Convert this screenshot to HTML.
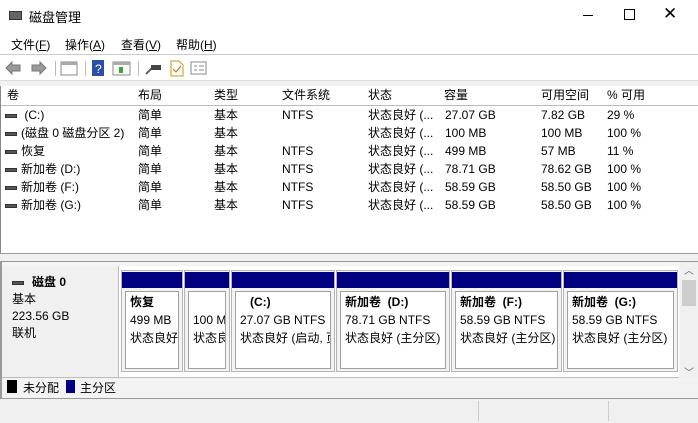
<!DOCTYPE html>
<html><head><meta charset="utf-8"><style>
*{margin:0;padding:0;box-sizing:border-box}
body{width:698px;height:423px;overflow:hidden;background:#fff;font-family:"Liberation Sans","Noto Sans CJK SC",sans-serif;font-size:12px;color:#000;position:relative}
.a{position:absolute;white-space:nowrap}
.hd{position:absolute;top:86px;height:20px;background:#fff;border-right:1px solid #aaa;border-bottom:1px solid #bbb;padding-left:6px;line-height:19px}
.row{position:absolute;left:0;width:690px;height:18px;line-height:18px}
.row span{position:absolute}
.di{display:inline-block;width:12px;height:4px;background:#555;border:1px solid #333;vertical-align:middle;margin-right:4px}
.p{position:absolute;top:270px;height:102px;border:1px solid #b5b5b5;background:#f3f3f3}
.p .bar{position:absolute;left:0;right:0;top:1px;height:16px;background:#000080}
.p .in{position:absolute;left:3px;right:3px;top:20px;bottom:2px;background:#fff;border:1px solid #a0a0a0;padding:1px 0 0 4px;line-height:18px;overflow:hidden;white-space:nowrap}
b{font-weight:bold}
</style></head><body>
<div class="a" style="left:9px;top:11px;width:13px;height:9px;background:#666;border:1px solid #333"></div>
<div class="a" style="left:29px;top:7px;font-size:13px">磁盘管理</div>
<div class="a" style="left:583px;top:15px;width:10px;height:1px;background:#000"></div>
<div class="a" style="left:624px;top:9px;width:11px;height:11px;border:1px solid #000"></div>
<div class="a" style="left:663px;top:4px;font-size:17px;font-weight:300">✕</div>
<div class="a" style="left:11px;top:36px">文件(<u>F</u>)</div>
<div class="a" style="left:65px;top:36px">操作(<u>A</u>)</div>
<div class="a" style="left:121px;top:36px">查看(<u>V</u>)</div>
<div class="a" style="left:176px;top:36px">帮助(<u>H</u>)</div>
<div class="a" style="left:0;top:54px;width:698px;height:1px;background:#ccc"></div>
<div class="a" style="left:0;top:55px;width:698px;height:25px;background:#fff"></div>
<svg class="a" style="left:4px;top:59px" width="220" height="18">
<path d="M2 9 L8 3 V6 H16 V12 H8 V15 Z" fill="#999" stroke="#777"/>
<path d="M42 9 L36 3 V6 H28 V12 H36 V15 Z" fill="#999" stroke="#777"/>
<rect x="51" y="2" width="1" height="15" fill="#bbb"/>
<rect x="57" y="3" width="16" height="13" fill="#fff" stroke="#888"/><rect x="57" y="3" width="16" height="3" fill="#aaa"/>
<rect x="81" y="2" width="1" height="15" fill="#bbb"/>
<rect x="88" y="1" width="12" height="16" fill="#2a4fa8"/><text x="91" y="14" fill="#fff" font-size="12" font-family="Liberation Sans">?</text>
<rect x="109" y="3" width="17" height="13" fill="#fff" stroke="#888"/><rect x="109" y="3" width="17" height="3" fill="#aaa"/><rect x="115" y="8" width="4" height="6" fill="#3a3"/>
<rect x="134" y="2" width="1" height="15" fill="#bbb"/>
<path d="M142 15 L148 9" stroke="#666" stroke-width="2"/><rect x="147" y="6" width="10" height="5" fill="#444"/>
<path d="M167 2 H175 L179 6 V17 H167 Z" fill="#fff" stroke="#c90"/><path d="M169 10 L172 13 L177 7" stroke="#c60" fill="none"/>
<rect x="187" y="3" width="15" height="12" fill="#fff" stroke="#888"/><path d="M190 7h3M190 11h3M195 7h5M195 11h5" stroke="#888"/>
</svg>
<div class="a" style="left:0;top:80px;width:698px;height:6px;background:#f0f0f0;border-top:1px solid #ddd"></div>
<div class="a" style="left:0;top:86px;width:1px;height:168px;background:#888"></div>
<div class="hd" style="left:1px;width:132px">卷</div>
<div class="hd" style="left:132px;width:77px">布局</div>
<div class="hd" style="left:208px;width:69px">类型</div>
<div class="hd" style="left:276px;width:87px">文件系统</div>
<div class="hd" style="left:362px;width:77px">状态</div>
<div class="hd" style="left:438px;width:98px">容量</div>
<div class="hd" style="left:535px;width:67px">可用空间</div>
<div class="hd" style="left:601px;width:90px">% 可用</div>
<div class="hd" style="left:690px;width:8px;border-right:none"></div>
<div class="row" style="top:106px"><span style="left:5px"><i class="di"></i> (C:)</span><span style="left:138px">简单</span><span style="left:214px">基本</span><span style="left:282px">NTFS</span><span style="left:368px">状态良好 (...</span><span style="left:445px">27.07 GB</span><span style="left:541px">7.82 GB</span><span style="left:607px">29 %</span></div>
<div class="row" style="top:124px"><span style="left:5px"><i class="di"></i>(磁盘 0 磁盘分区 2)</span><span style="left:138px">简单</span><span style="left:214px">基本</span><span style="left:368px">状态良好 (...</span><span style="left:445px">100 MB</span><span style="left:541px">100 MB</span><span style="left:607px">100 %</span></div>
<div class="row" style="top:142px"><span style="left:5px"><i class="di"></i>恢复</span><span style="left:138px">简单</span><span style="left:214px">基本</span><span style="left:282px">NTFS</span><span style="left:368px">状态良好 (...</span><span style="left:445px">499 MB</span><span style="left:541px">57 MB</span><span style="left:607px">11 %</span></div>
<div class="row" style="top:160px"><span style="left:5px"><i class="di"></i>新加卷 (D:)</span><span style="left:138px">简单</span><span style="left:214px">基本</span><span style="left:282px">NTFS</span><span style="left:368px">状态良好 (...</span><span style="left:445px">78.71 GB</span><span style="left:541px">78.62 GB</span><span style="left:607px">100 %</span></div>
<div class="row" style="top:178px"><span style="left:5px"><i class="di"></i>新加卷 (F:)</span><span style="left:138px">简单</span><span style="left:214px">基本</span><span style="left:282px">NTFS</span><span style="left:368px">状态良好 (...</span><span style="left:445px">58.59 GB</span><span style="left:541px">58.50 GB</span><span style="left:607px">100 %</span></div>
<div class="row" style="top:196px"><span style="left:5px"><i class="di"></i>新加卷 (G:)</span><span style="left:138px">简单</span><span style="left:214px">基本</span><span style="left:282px">NTFS</span><span style="left:368px">状态良好 (...</span><span style="left:445px">58.59 GB</span><span style="left:541px">58.50 GB</span><span style="left:607px">100 %</span></div>
<div class="a" style="left:0;top:253px;width:698px;height:9px;background:#f0f0f0;border-top:1px solid #999;border-bottom:1px solid #999"></div>
<div class="a" style="left:0;top:262px;width:698px;height:137px;background:#f3f3f3"></div>
<div class="a" style="left:0;top:262px;width:2px;height:137px;background:#999"></div>
<div class="a" style="left:2px;top:266px;width:117px;height:112px;background:#f0f0f0;border-right:1px solid #bbb;border-bottom:1px solid #bbb;padding:8px 0 0 10px;line-height:17px">
<div><i class="di" style="margin-right:8px"></i><b>磁盘 0</b></div><div>基本</div><div>223.56 GB</div><div>联机</div></div>
<div class="a" style="left:119px;top:266px;width:560px;height:112px;background:#fff;border-bottom:1px solid #bbb"></div>
<div class="p" style="left:121px;width:62px"><div class="bar"></div><div class="in"><b>恢复</b><br>499 MB<br>状态良好</div></div>
<div class="p" style="left:184px;width:46px"><div class="bar"></div><div class="in"><br>100 MB<br>状态良好</div></div>
<div class="p" style="left:231px;width:104px"><div class="bar"></div><div class="in">&nbsp;&nbsp;&nbsp;<b>(C:)</b><br>27.07 GB NTFS<br>状态良好 (启动, 页</div></div>
<div class="p" style="left:336px;width:114px"><div class="bar"></div><div class="in"><b>新加卷 &nbsp;(D:)</b><br>78.71 GB NTFS<br>状态良好 (主分区)</div></div>
<div class="p" style="left:451px;width:111px"><div class="bar"></div><div class="in"><b>新加卷 &nbsp;(F:)</b><br>58.59 GB NTFS<br>状态良好 (主分区)</div></div>
<div class="p" style="left:563px;width:115px"><div class="bar"></div><div class="in"><b>新加卷 &nbsp;(G:)</b><br>58.59 GB NTFS<br>状态良好 (主分区)</div></div>
<div class="a" style="left:680px;top:262px;width:18px;height:116px;background:#f0f0f0"></div>
<div class="a" style="left:684px;top:262px;font-size:10px;color:#666">︿</div>
<div class="a" style="left:682px;top:280px;width:14px;height:26px;background:#cdcdcd"></div>
<div class="a" style="left:684px;top:364px;font-size:10px;color:#666">﹀</div>
<div class="a" style="left:7px;top:380px;width:10px;height:13px;background:#000"></div>
<div class="a" style="left:23px;top:379px">未分配</div>
<div class="a" style="left:66px;top:380px;width:9px;height:13px;background:#000080"></div>
<div class="a" style="left:80px;top:379px">主分区</div>
<div class="a" style="left:0;top:398px;width:698px;height:1px;background:#999"></div>
<div class="a" style="left:0;top:399px;width:698px;height:24px;background:#f0f0f0"></div>
<div class="a" style="left:478px;top:401px;width:1px;height:20px;background:#ccc"></div>
<div class="a" style="left:608px;top:401px;width:1px;height:20px;background:#ccc"></div>
</body></html>
